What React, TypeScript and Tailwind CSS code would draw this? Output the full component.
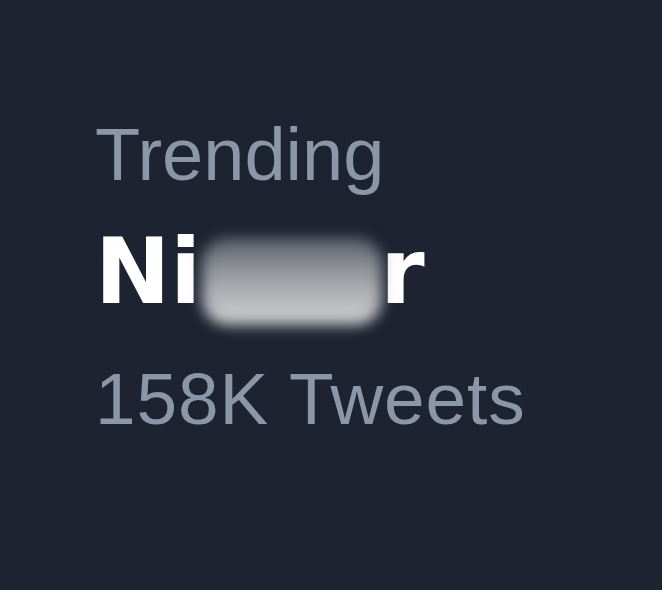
export default function App() {
  return (
    <div
      className="w-[662px] h-[590px] bg-[#1d2330] overflow-hidden pl-[95px] pt-[118px]"
      style={{ fontFamily: '"Liberation Sans", Arial, sans-serif' }}
    >
      <div className="text-[74px] leading-none text-[#8b96a8]">Trending</div>
      <div
        className="mt-[35px] flex items-start text-[90px] leading-none font-bold text-white"
        style={{ fontFamily: '"DejaVu Sans", "Liberation Sans", sans-serif' }}
      >
        <span>Ni</span>
        <div className="ml-[1px] -mr-[2px] mt-[11px] w-[180px] h-[87px] rounded-[26px] bg-gradient-to-b from-[#5d616b] via-[#a3a5aa] to-[#cfd0d3] blur-[7px]" />
        <span>r</span>
      </div>
      <div className="mt-[37px] text-[73px] leading-none text-[#8b96a8] tracking-[0.9px]">158K Tweets</div>
    </div>
  );
}
